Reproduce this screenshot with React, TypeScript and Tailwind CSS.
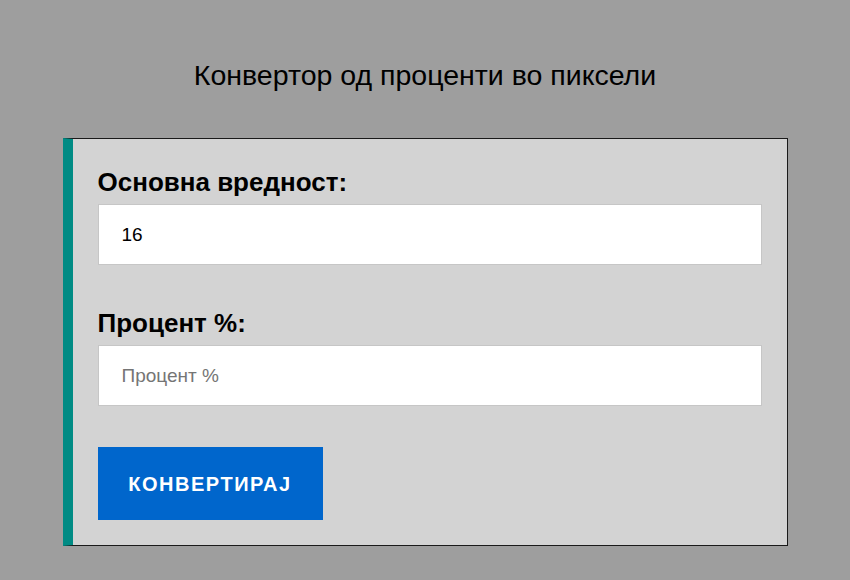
export default function App() {
  return (
    <div className="min-h-[580px] bg-[#9e9e9e] pt-[58px] pb-[34px] font-['Liberation_Sans',Arial,sans-serif]">
      <h1 className="text-center text-[28.5px] leading-[34px] text-black">
        Конвертор од проценти во пиксели
      </h1>

      <form
        className="mx-auto mt-[46px] w-[725px] border border-l-[10px] border-[#1a1a1a] border-l-[#008b84] bg-[#d3d3d3] px-[25px] pt-[28px] pb-[25px]"
        onSubmit={(e) => e.preventDefault()}
      >
        <label className="block text-[26px] leading-[30px] font-bold text-black">
          Основна вредност:
        </label>
        <input
          type="text"
          defaultValue="16"
          className="mt-[7px] block h-[61px] w-full border border-[#c6c6c6] bg-white px-[23px] text-[19px] text-black outline-none"
        />

        <label className="mt-[43px] block text-[26px] leading-[30px] font-bold text-black">
          Процент %:
        </label>
        <input
          type="text"
          placeholder="Процент %"
          className="mt-[7px] block h-[61px] w-full border border-[#c6c6c6] bg-white px-[23px] text-[19px] text-black outline-none placeholder:text-[#757575]"
        />

        <button
          type="submit"
          className="mt-[41px] block h-[73px] w-[225px] bg-[#0066cc] text-[20px] font-bold tracking-[1.5px] text-white uppercase"
        >
          Конвертирај
        </button>
      </form>
    </div>
  );
}
